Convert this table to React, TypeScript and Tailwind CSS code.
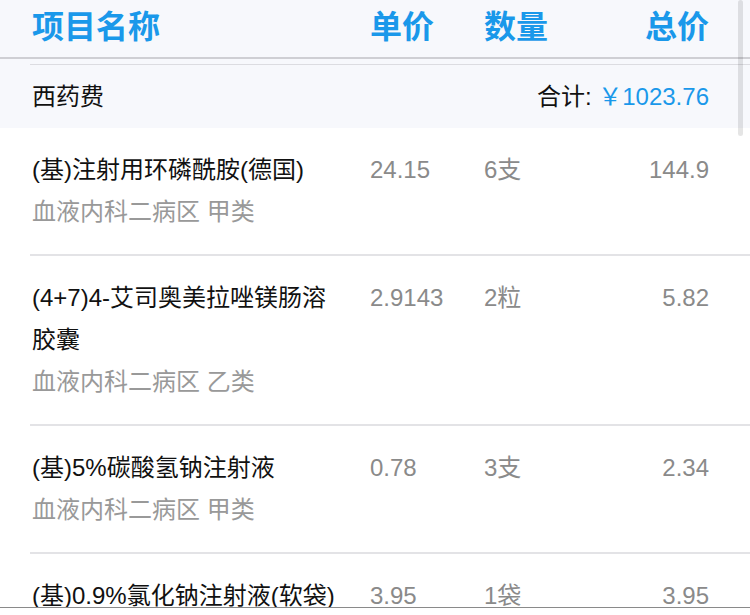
interface FeeItem {
  name: string;
  dept: string;
  grade: string;
  price: string;
  qty: string;
  total: string;
}

const items: FeeItem[] = [
  { name: "(基)注射用环磷酰胺(德国)", dept: "血液内科二病区", grade: "甲类", price: "24.15", qty: "6支", total: "144.9" },
  { name: "(4+7)4-艾司奥美拉唑镁肠溶胶囊", dept: "血液内科二病区", grade: "乙类", price: "2.9143", qty: "2粒", total: "5.82" },
  { name: "(基)5%碳酸氢钠注射液", dept: "血液内科二病区", grade: "甲类", price: "0.78", qty: "3支", total: "2.34" },
  { name: "(基)0.9%氯化钠注射液(软袋)", dept: "血液内科二病区", grade: "甲类", price: "3.95", qty: "1袋", total: "3.95" },
];

const font = { fontFamily: '"Liberation Sans", "Noto Sans CJK SC", sans-serif' };

const FeeRow = ({ item }: { item: FeeItem }) => {
  return (
    <div className="ml-[30px] border-b-2 border-[#e3e3e6] py-[21px] pl-[2px] pr-[41px]">
      <div className="grid grid-cols-[338px_114px_1fr_1fr] text-[24px] leading-[42px]">
        <div className="pr-[26px]">
          <div className="text-[#111]">{item.name}</div>
          <div className="text-[#999]">
            {item.dept} {item.grade}
          </div>
        </div>
        <div className="text-[#8a8a8a]">{item.price}</div>
        <div className="text-[#8a8a8a]">{item.qty}</div>
        <div className="text-right text-[#8a8a8a]">{item.total}</div>
      </div>
    </div>
  );
};

export default function App() {
  return (
    <div className="relative flex h-[615px] w-[750px] flex-col overflow-hidden bg-white" style={font}>
      <div className="flex h-[57px] shrink-0 items-center bg-[#f7f8fc] pb-[3px] pl-[32px] pr-[41px] text-[32px] font-semibold text-[#1a98ea]">
        <div className="w-[338px]">项目名称</div>
        <div className="w-[114px]">单价</div>
        <div className="flex-1">数量</div>
        <div className="text-right">总价</div>
      </div>
      <div className="h-[1.5px] shrink-0 bg-[#cfcfd4]" />
      <div className="shrink-0 bg-[#f7f8fc] pt-[5px]">
        <div className="ml-[30px] h-[1.5px] bg-[#dcdce1]" />
        <div className="flex h-[63px] items-center justify-between pl-[32px] pr-[41px] text-[24px]">
          <span className="text-[#111]">西药费</span>
          <span className="text-[#111]">
            合计: <span className="text-[#1a98ea]">￥1023.76</span>
          </span>
        </div>
      </div>
      <div className="flex-1 overflow-hidden">
        {items.map((item) => (
          <FeeRow key={item.name} item={item} />
        ))}
      </div>
      <div className="h-[8px] shrink-0 border-t border-[#8a8a8a] bg-white" />
      <div className="absolute right-[7px] top-0 h-[136px] w-[5px] rounded-full bg-black/10" />
    </div>
  );
}
